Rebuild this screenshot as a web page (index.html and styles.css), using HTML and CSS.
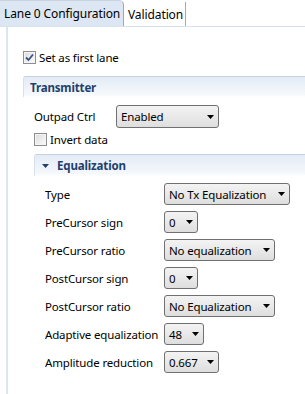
FILE: index.html
```html
<!DOCTYPE html>
<html>
<head>
<meta charset="utf-8">
<link rel="stylesheet" href="styles.css">
</head>
<body>
<div class="folder">
  <div class="tabs">
    <div class="tab tab-active">Lane 0 Configuration</div>
    <div class="tab tab-plain">Validation</div>
  </div>
  <div class="pane">
    <label class="check first-check">
      <span class="box"><svg width="9" height="9" viewBox="0 0 9 9"><path d="M1 4.5 L3.5 7 L8 1.5" fill="none" stroke="#3b4f86" stroke-width="1.8"/></svg></span>
      <span>Set as first lane</span>
    </label>

    <section class="section tx">
      <div class="head">Transmitter</div>
      <div class="sbody">
        <div class="outpad">
          <span class="olbl">Outpad Ctrl</span>
          <div class="combo c-outpad"><span>Enabled</span><svg class="arr" width="7" height="4" viewBox="0 0 7 4"><path d="M0 0H7L3.5 4Z" fill="#000"/></svg></div>
        </div>
        <label class="check invert-check">
          <span class="box"></span>
          <span>Invert data</span>
        </label>

        <section class="section eq">
          <div class="head eq-head"><svg class="twist" width="7" height="4" viewBox="0 0 7 4"><path d="M0 0H7L3.5 4Z" fill="#1f3f6d"/></svg>Equalization</div>
          <div class="grid">
            <span class="lbl">Type</span>
            <div class="combo c-type"><span>No Tx Equalization</span><svg class="arr" width="7" height="4" viewBox="0 0 7 4"><path d="M0 0H7L3.5 4Z" fill="#000"/></svg></div>

            <span class="lbl">PreCursor sign</span>
            <div class="combo c-sign"><span>0</span><svg class="arr" width="7" height="4" viewBox="0 0 7 4"><path d="M0 0H7L3.5 4Z" fill="#000"/></svg></div>

            <span class="lbl">PreCursor ratio</span>
            <div class="combo c-ratio"><span>No equalization</span><svg class="arr" width="7" height="4" viewBox="0 0 7 4"><path d="M0 0H7L3.5 4Z" fill="#000"/></svg></div>

            <span class="lbl">PostCursor sign</span>
            <div class="combo c-sign"><span>0</span><svg class="arr" width="7" height="4" viewBox="0 0 7 4"><path d="M0 0H7L3.5 4Z" fill="#000"/></svg></div>

            <span class="lbl">PostCursor ratio</span>
            <div class="combo c-ratio"><span>No Equalization</span><svg class="arr" width="7" height="4" viewBox="0 0 7 4"><path d="M0 0H7L3.5 4Z" fill="#000"/></svg></div>

            <span class="lbl">Adaptive equalization</span>
            <div class="combo c-adapt"><span>48</span><svg class="arr" width="7" height="4" viewBox="0 0 7 4"><path d="M0 0H7L3.5 4Z" fill="#000"/></svg></div>

            <span class="lbl">Amplitude reduction</span>
            <div class="combo c-amp"><span>0.667</span><svg class="arr" width="7" height="4" viewBox="0 0 7 4"><path d="M0 0H7L3.5 4Z" fill="#000"/></svg></div>
          </div>
        </section>
      </div>
    </section>
  </div>
</div>
</body>
</html>
```
FILE: styles.css
```css
* { box-sizing: border-box; }
html, body { margin: 0; padding: 0; background: #fff; }
body {
  font-family: "Noto Sans", "Open Sans", sans-serif;
  font-size: 11.5px;
  letter-spacing: -0.15px;
  color: #000;
  width: 305px;
  height: 394px;
  overflow: hidden;
}
.folder { display: flex; flex-direction: column; height: 394px; }
.tabs {
  display: flex;
  height: 27px;
  flex: none;
  border-bottom: 1px solid #d6e2f0;
}
.tab {
  display: flex;
  align-items: center;
  height: 26px;
  white-space: nowrap;
  font-size: 12px;
  letter-spacing: -0.1px;
}
.tab-active {
  width: 124px;
  padding-left: 4px;
  background: #dde7f3;
  border-top-right-radius: 5px;
  border-right: 1px solid #9aa9ba;
  border-top: 1px solid #c6d3e3;
}
.tab-plain {
  width: 62px;
  padding-left: 4px;
  margin-top: 2px;
  height: 24px;
  border-right: 1px solid #a8a8a8;
}
.pane {
  flex: 1;
  margin-left: 6px;
  border-left: 2px solid #d9e5f2;
  padding-left: 15px;
  padding-top: 22px;
}
.check {
  display: flex;
  align-items: center;
  height: 17px;
  gap: 3px;
}
.box {
  width: 13px;
  height: 13px;
  border: 1px solid #8f8f8f;
  background: linear-gradient(135deg, #dcdcdc, #fbfbfb);
  box-shadow: inset 0 0 0 1px #f4f4f4;
  display: flex;
  align-items: center;
  justify-content: center;
  flex: none;
}
.section.tx { margin-top: 10px; }
.head {
  height: 21px;
  display: flex;
  align-items: center;
  padding-left: 6px;
  font-weight: bold;
  color: #1f3f6d;
  border-top: 1px solid #c4d2e3;
  border-left: 1px solid #d5e0ed;
  border-top-left-radius: 3px;
  background: linear-gradient(to bottom, #e3ebf5, #f6f9fc 90%, #ffffff);
}
.sbody { padding-left: 11px; }
.outpad {
  display: flex;
  align-items: center;
  margin-top: 8px;
}
.olbl { width: 82px; }
.combo {
  height: 22px;
  border: 1px solid #707070;
  border-radius: 3px;
  background: linear-gradient(to bottom, #f3f3f3, #e9e9e9 50%, #dedede);
  display: flex;
  align-items: center;
  justify-content: space-between;
  padding-left: 4px;
  padding-right: 4px;
  white-space: nowrap;
}
.arr { flex: none; }
.c-outpad { width: 103px; height: 23px; }
.c-type { width: 126px; }
.c-sign { width: 34px; }
.c-ratio { width: 111px; }
.c-adapt { width: 40px; }
.c-amp { width: 55px; }
.invert-check { margin-top: 3px; }
.section.eq { margin-top: 6px; }
.eq-head {
  height: 22px;
  padding-left: 7px;
  gap: 8px;
}
.grid {
  display: grid;
  grid-template-columns: 119px auto;
  justify-items: start;
  align-items: center;
  row-gap: 6px;
  padding-top: 7px;
  padding-left: 11px;
}
.lbl { white-space: nowrap; }
```
